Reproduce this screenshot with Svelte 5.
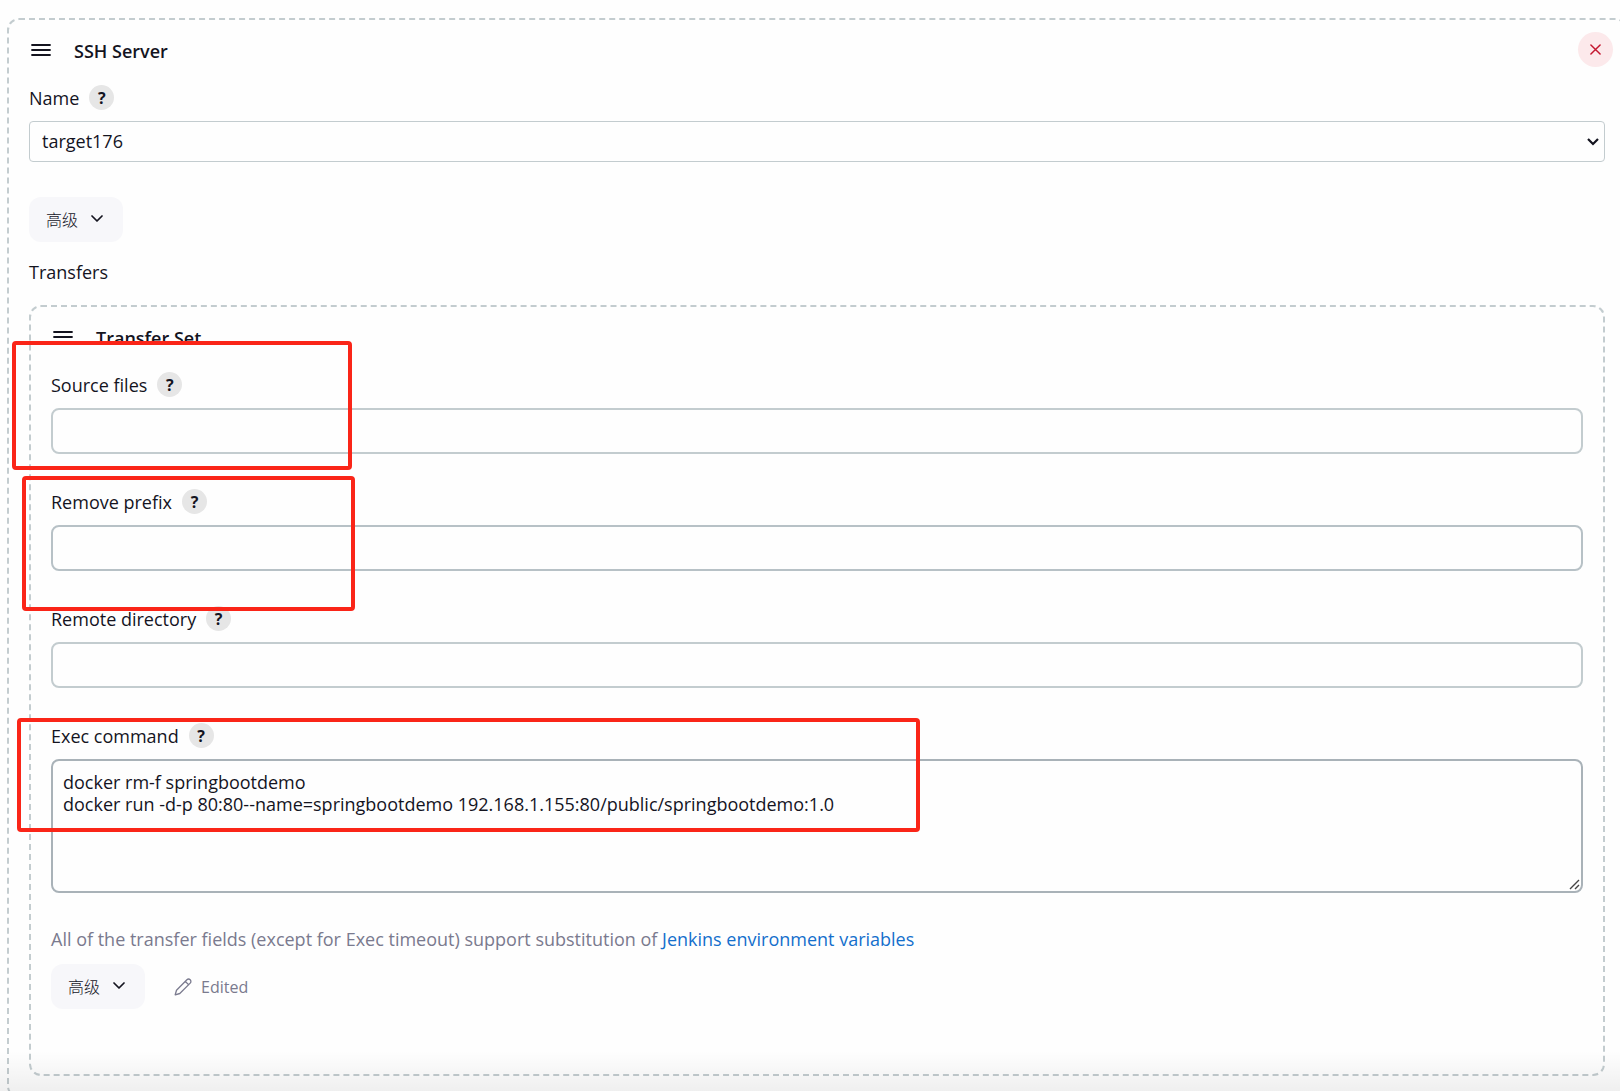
<script lang="ts">
	type Field = { id: string; label: string; tone: string };

	const fields: Field[] = [
		{ id: 'source-files', label: 'Source files', tone: 'light' },
		{ id: 'remove-prefix', label: 'Remove prefix', tone: 'hover' },
		{ id: 'remote-directory', label: 'Remote directory', tone: 'light' },
	];

	let server = $state('target176');
	let values = $state<Record<string, string>>({
		'source-files': '',
		'remove-prefix': '',
		'remote-directory': '',
	});
	let command = $state(
		'docker rm-f springbootdemo\ndocker run -d-p 80:80--name=springbootdemo 192.168.1.155:80/public/springbootdemo:1.0'
	);
</script>

{#snippet handle()}
	<svg class="handle" viewBox="0 0 20 14" aria-hidden="true">
		<path d="M1 2h18M1 7h18M1 12h18" fill="none" stroke="currentColor" stroke-width="1.8" stroke-linecap="round" />
	</svg>
{/snippet}

{#snippet help(label: string)}
	<button type="button" class="help" aria-label={`Help for feature: ${label}`}>?</button>
{/snippet}

{#snippet advanced()}
	<button type="button" class="btn-advanced">
		高级
		<svg viewBox="0 0 12 8" aria-hidden="true">
			<path d="M1 1l5 5 5-5" fill="none" stroke="currentColor" stroke-width="1.7" stroke-linecap="round" stroke-linejoin="round" />
		</svg>
	</button>
{/snippet}

<main class="page">
	<section class="chunk outer">
		<header class="chunk-header">
			{@render handle()}
			<h2>SSH Server</h2>
			<button type="button" class="btn-delete" aria-label="Delete">
				<svg viewBox="0 0 12 12" aria-hidden="true">
					<path d="M1 1l10 10M11 1L1 11" fill="none" stroke="currentColor" stroke-width="1.6" stroke-linecap="round" />
				</svg>
			</button>
		</header>

		<div class="field">
			<div class="field-label">
				<label for="server-name">Name</label>
				{@render help('Name')}
			</div>
			<div class="select">
				<select id="server-name" bind:value={server}>
					<option value="target176">target176</option>
				</select>
				<svg viewBox="0 0 12 8" aria-hidden="true">
					<path d="M1 1l5 5 5-5" fill="none" stroke="currentColor" stroke-width="2.2" />
				</svg>
			</div>
		</div>

		{@render advanced()}

		<div class="transfers-title">Transfers</div>

		<section class="chunk inner">
			<header class="chunk-header">
				{@render handle()}
				<h2>Transfer Set</h2>
			</header>

			{#each fields as field (field.id)}
				<div class="field">
					<div class="field-label">
						<label for={field.id}>{field.label}</label>
						{@render help(field.label)}
					</div>
					<input id={field.id} class={field.tone} type="text" bind:value={values[field.id]} />
				</div>
			{/each}

			<div class="field">
				<div class="field-label">
					<label for="exec-command">Exec command</label>
					{@render help('Exec command')}
				</div>
				<textarea id="exec-command" spellcheck="false" bind:value={command}></textarea>
			</div>

			<p class="description">
				All of the transfer fields (except for Exec timeout) support substitution of
				<a href="#env-vars">Jenkins environment variables</a>
			</p>

			<div class="actions">
				{@render advanced()}
				<span class="edited">
					<svg viewBox="0 0 18 18" aria-hidden="true">
						<path d="M1.2 16.8l1.3-4.6L12.9 1.8a2.2 2.2 0 0 1 3.3 3.3L5.8 15.5z M11.3 3.4l3.3 3.3" fill="none" stroke="currentColor" stroke-width="1.3" stroke-linecap="round" stroke-linejoin="round" />
					</svg>
					Edited
				</span>
			</div>
		</section>
	</section>

	<!-- Highlight frames over the form -->
	<div class="mark mark-source"></div>
	<div class="mark mark-prefix"></div>
	<div class="mark mark-command"></div>

	<div class="bottom-shade"></div>
</main>

<style>
	:global(body) {
		background: #fefefe;
	}

	.page {
		position: relative;
		box-sizing: border-box;
		height: 100vh;
		padding: 18px 0 0 7px;
		overflow: hidden;
		font-family: 'Open Sans', 'Noto Sans', 'Noto Sans CJK SC', sans-serif;
		font-size: 18px;
		line-height: 24px;
		color: #14141f;
	}

	.page :is(button, input, select, textarea) {
		box-sizing: border-box;
		margin: 0;
		font-family: inherit;
		color: inherit;
	}

	svg {
		display: block;
		flex-shrink: 0;
	}

	/* ── Dashed chunks ─────────────────────────────── */
	.chunk {
		border: 2px dashed #c3cccf;
		border-radius: 12px;
		padding: 12px 20px 20px;
	}

	.outer {
		margin-right: -7px;
	}

	.inner {
		padding-bottom: 65px;
	}

	.chunk-header {
		display: flex;
		align-items: center;
		height: 35px;
		margin: 0 -8px 18px 0;
	}

	.handle {
		width: 20px;
		height: 14px;
		margin: 0 23px 0 2px;
	}

	h2 {
		margin: 0;
		padding-top: 2px;
		font-size: 18px;
		font-weight: 600;
	}

	.page .btn-delete {
		display: grid;
		place-items: center;
		width: 35px;
		height: 35px;
		margin-left: auto;
		padding: 0;
		border: 0;
		border-radius: 50%;
		background: #fce9eb;
	}

	.btn-delete svg {
		width: 11px;
		height: 11px;
		color: #c4162f;
	}

	/* ── Fields ────────────────────────────────────── */
	.field {
		margin-bottom: 35px;
	}

	.field-label {
		display: flex;
		align-items: center;
		gap: 10px;
		height: 25px;
		margin-bottom: 11px;
	}

	.help {
		width: 25px;
		height: 25px;
		padding: 0;
		border: 0;
		border-radius: 50%;
		background: #e6e6e6;
		font-size: 16px;
		font-weight: 700;
		line-height: 24px;
		text-align: center;
	}

	.select {
		position: relative;
	}

	select {
		display: block;
		width: 100%;
		height: 41px;
		padding: 0 32px 2px 12px;
		border: 1px solid #c3cccf;
		border-radius: 4px;
		background: #fefefe;
		font-size: 18px;
		appearance: none;
	}

	.select svg {
		position: absolute;
		top: 17px;
		right: 6px;
		width: 12px;
		height: 8px;
		pointer-events: none;
	}

	input,
	textarea {
		display: block;
		width: 100%;
		border: 2px solid #c3cccf;
		border-radius: 8px;
		background: #fefefe;
		font-size: 18px;
	}

	input {
		height: 46px;
		padding: 0 10px;
	}

	input.hover {
		border-color: #b7c1c6;
	}

	textarea {
		height: 134px;
		padding: 10px;
		border-color: #a9b2b8;
		line-height: 22px;
		resize: vertical;
	}

	textarea::-webkit-resizer {
		background: url("data:image/svg+xml,%3Csvg xmlns='http://www.w3.org/2000/svg' width='15' height='15'%3E%3Cpath d='M4 13l9-9M9 13l4-4' stroke='%23444' stroke-width='1.4'/%3E%3C/svg%3E") no-repeat;
	}

	/* ── Buttons and notes ─────────────────────────── */
	.btn-advanced {
		display: flex;
		align-items: center;
		gap: 13px;
		height: 45px;
		padding: 0 20px 2px 17px;
		border: 0;
		border-radius: 12px;
		background: #f7f7fa;
		font-size: 16px;
		font-weight: 300;
	}

	.btn-advanced svg {
		width: 12px;
		height: 8px;
	}

	.transfers-title {
		margin: 18px 0 21px;
	}

	.description {
		margin: 0 0 14px;
		line-height: 22px;
		color: #7a7a8e;
	}

	.description a {
		color: #146fcc;
		text-decoration: none;
	}

	.actions {
		display: flex;
		align-items: center;
		gap: 29px;
	}

	.edited {
		display: flex;
		align-items: center;
		gap: 9px;
		font-size: 16px;
		color: #7a7a8e;
	}

	.edited svg {
		width: 18px;
		height: 18px;
	}

	/* ── Overlays ──────────────────────────────────── */
	.mark {
		position: absolute;
		box-sizing: border-box;
		border: 4px solid #fa2518;
		border-radius: 4px;
		pointer-events: none;
	}

	.mark-source {
		top: 341px;
		left: 12px;
		width: 340px;
		height: 129px;
	}

	.mark-prefix {
		top: 476px;
		left: 22px;
		width: 333px;
		height: 135px;
	}

	.mark-command {
		top: 718px;
		left: 17px;
		width: 903px;
		height: 114px;
	}

	.bottom-shade {
		position: absolute;
		right: 0;
		bottom: 0;
		left: 0;
		height: 40px;
		background: linear-gradient(rgba(0, 0, 0, 0), rgba(0, 0, 0, 0.06));
		pointer-events: none;
	}
</style>
